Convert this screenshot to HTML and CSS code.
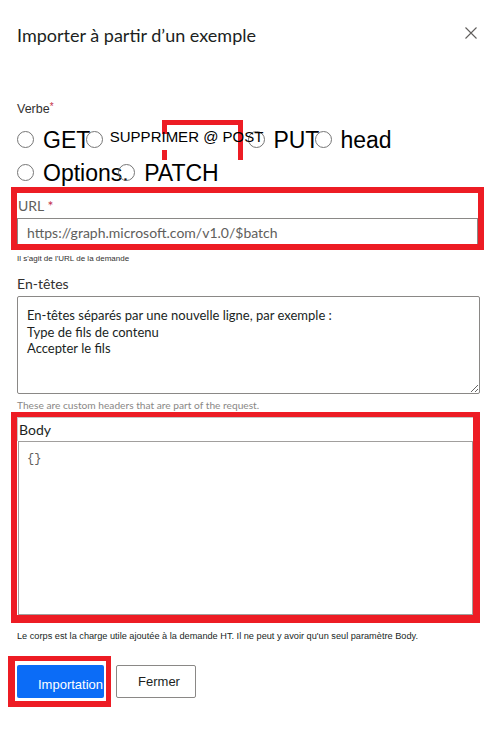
FILE: index.html
```html
<!DOCTYPE html>
<html lang="fr">
<head>
<meta charset="utf-8">
<title>Importer à partir d’un exemple</title>
<link rel="stylesheet" href="styles.css">
</head>
<body>
<div class="dialog">
  <div class="head">
    <h1 class="title">Importer à partir d’un exemple</h1>
    <button class="close" aria-label="Fermer"><svg width="12" height="12" viewBox="0 0 12 12"><path d="M0.5 0.5L11.5 11.5M11.5 0.5L0.5 11.5" stroke="#605e5c" stroke-width="1.1" fill="none"/></svg></button>
  </div>
  <div class="verb-label">Verbe<span class="req">*</span></div>
  <div class="radios">
    <div class="radio-row"><span class="dot"></span><span class="l-get">GET</span><span class="dot d-del"></span><span class="small">SUPPRIMER @ POST</span><span class="dot d-put"></span><span class="l-put">PUT</span><span class="dot d-head"></span><span class="l-head">head</span></div>
    <div class="radio-row"><span class="dot"></span><span class="l-opt">Options.</span><span class="dot d-patch"></span><span class="l-patch">PATCH</span></div>
    <span class="mark-post"></span>
  </div>
  <div class="url-box">
    <div class="url-label">URL <span class="req-url">*</span></div>
    <input class="url-input" type="text" value="https://graph.microsoft.com/v1.0/$batch">
  </div>
  <div class="hint">Il s'agit de l'URL de la demande</div>
  <div class="field-label">En-têtes</div>
  <textarea class="headers">En-têtes séparés par une nouvelle ligne, par exemple :
Type de fils de contenu
Accepter le fils</textarea>
  <div class="desc">These are custom headers that are part of the request.</div>
  <div class="body-box">
    <div class="body-label">Body</div>
    <textarea class="body-input">{}</textarea>
  </div>
  <div class="caption">Le corps est la charge utile ajoutée à la demande HT. Il ne peut y avoir qu'un seul paramètre Body.</div>
  <div class="actions">
    <div class="primary-wrap"><button class="btn btn-primary">Importation</button></div>
    <button class="btn btn-secondary">Fermer</button>
  </div>
</div>
</body>
</html>
```
FILE: styles.css
```css
* { box-sizing: border-box; }
html, body { margin: 0; background: #fff; }
body {
  font-family: Lato, "Open Sans", sans-serif;
  color: #201f1e;
  width: 500px;
  height: 730px;
  overflow: hidden;
}
.dialog { padding: 0 21px 0 17px; }

.head {
  display: flex;
  justify-content: space-between;
  align-items: flex-start;
  padding-top: 23px;
}
.title {
  margin: 0;
  font-size: 18px;
  line-height: 24px;
  font-weight: 400;
  color: #201f1e;
}
.close {
  margin: 4px 2px 0 0;
  padding: 0;
  border: 0;
  background: none;
  width: 12px;
  height: 12px;
  display: block;
}
.close svg { display: block; }

.verb-label {
  margin-top: 53px;
  font-family: "Liberation Sans", Arial, sans-serif;
  font-size: 12.5px;
  line-height: 14px;
  color: #323130;
}
.req { color: #c4314b; font-size: 10px; vertical-align: 3px; }

.radios {
  position: relative;
  margin-top: 8px;
  height: 63px;
  font-family: "Liberation Sans", Arial, sans-serif;
  color: #000;
}
.radio-row {
  line-height: 33px;
  font-size: 23px;
  white-space: nowrap;
}
.dot {
  display: inline-block;
  width: 17px;
  height: 17px;
  border: 1.5px solid #767676;
  border-radius: 50%;
  vertical-align: baseline;
}
.l-get { margin-left: 9px; }
.d-del { margin-left: -4.5px; }
.small {
  font-size: 15px;
  line-height: 20px;
  margin-left: 7px;
  vertical-align: 6.5px;
  position: relative;
  z-index: 1;
}
.d-put { margin-left: -15px; }
.l-put { margin-left: 8px; }
.d-head { margin-left: -4px; }
.l-head { margin-left: 8px; }
.l-opt { margin-left: 9px; }
.d-patch { margin-left: -10.5px; }
.l-patch { margin-left: 9px; }

.mark-post {
  position: absolute;
  left: 145px;
  top: -4px;
  width: 81px;
  height: 40px;
  border-top: 5px solid #ed1c24;
  border-right: 5px solid #ed1c24;
}
.mark-post::before,
.mark-post::after {
  content: "";
  position: absolute;
  left: 0;
  width: 5px;
  background: #ed1c24;
}
.mark-post::before { top: -5px; height: 14px; }
.mark-post::after { top: 25px; height: 10px; }

.url-box {
  margin: 0 -5px 0 -6px;
  border: 6px solid #ed1c24;
  height: 63px;
  overflow: hidden;
}
.url-label {
  margin-top: 3px;
  font-size: 14px;
  line-height: 20px;
  color: #605e5c;
  padding-left: 1px;
}
.req-url { color: #c4314b; }
.url-input {
  display: block;
  margin: 2px 0 0;
  width: 100%;
  height: 28px;
  border: 1px solid #8a8886;
  border-radius: 0;
  padding: 1px 9px 0;
  font-family: Lato, "Open Sans", sans-serif;
  font-size: 14px;
  color: #605e5c;
  background: #fff;
  outline: none;
}

.hint {
  margin-top: 4px;
  font-family: "Liberation Sans", Arial, sans-serif;
  font-size: 8px;
  line-height: 10px;
  color: #323130;
}
.field-label {
  margin-top: 10px;
  font-size: 14px;
  line-height: 20px;
  color: #323130;
}
.headers {
  display: block;
  margin: 2px 0 0;
  width: 463px;
  height: 98px;
  border: 1px solid #8a8886;
  border-radius: 2px;
  padding: 10px 9px;
  font-family: Lato, "Open Sans", sans-serif;
  font-size: 13px;
  line-height: 16.5px;
  color: #201f1e;
  outline: none;
}
.desc {
  margin-top: 5px;
  font-size: 10.2px;
  line-height: 12px;
  color: #8a8886;
}

.body-box {
  margin: 1px -1px 0 -6px;
  border-style: solid;
  border-color: #ed1c24;
  border-width: 5px 7px 8px 6px;
  height: 211px;
}
.body-label {
  border-top: 1px solid #c8c6c4;
  border-left: 1px solid #c8c6c4;
  height: 24px;
  font-size: 14px;
  line-height: 23px;
  padding-left: 1px;
  color: #201f1e;
}
.body-input {
  display: block;
  margin: 0 0 0 1px;
  width: calc(100% - 1px);
  height: 174px;
  border: 1px solid #a19f9d;
  border-radius: 0;
  padding: 9px 8px;
  font-family: "Liberation Mono", monospace;
  font-size: 12px;
  line-height: 16px;
  color: #605e5c;
  resize: none;
  outline: none;
}

.caption {
  margin-top: 7.5px;
  font-family: "Liberation Sans", Arial, sans-serif;
  font-size: 9.2px;
  line-height: 11px;
  color: #201f1e;
}

.actions {
  display: flex;
  align-items: center;
  gap: 5px;
  margin: 14.5px 0 0 -9px;
}
.primary-wrap {
  border-style: solid;
  border-color: #ed1c24;
  border-width: 5px 5px 6px 7px;
  padding: 4px 2px 3px 2px;
}
.btn {
  display: block;
  height: 33px;
  margin: 0;
  border-radius: 2px;
  font-family: "Liberation Sans", Arial, sans-serif;
  font-size: 13px;
}
.btn-primary {
  width: 87px;
  background: #0b6cf7;
  color: #fff;
  border: 0;
  text-align: left;
  padding: 6px 0 0 21px;
  line-height: 27px;
  white-space: nowrap;
  overflow: hidden;
}
.btn-secondary {
  width: 80px;
  background: #fff;
  border: 1px solid #8a8886;
  color: #201f1e;
  padding: 0 0 0 6px;
  line-height: 31px;
}
```
